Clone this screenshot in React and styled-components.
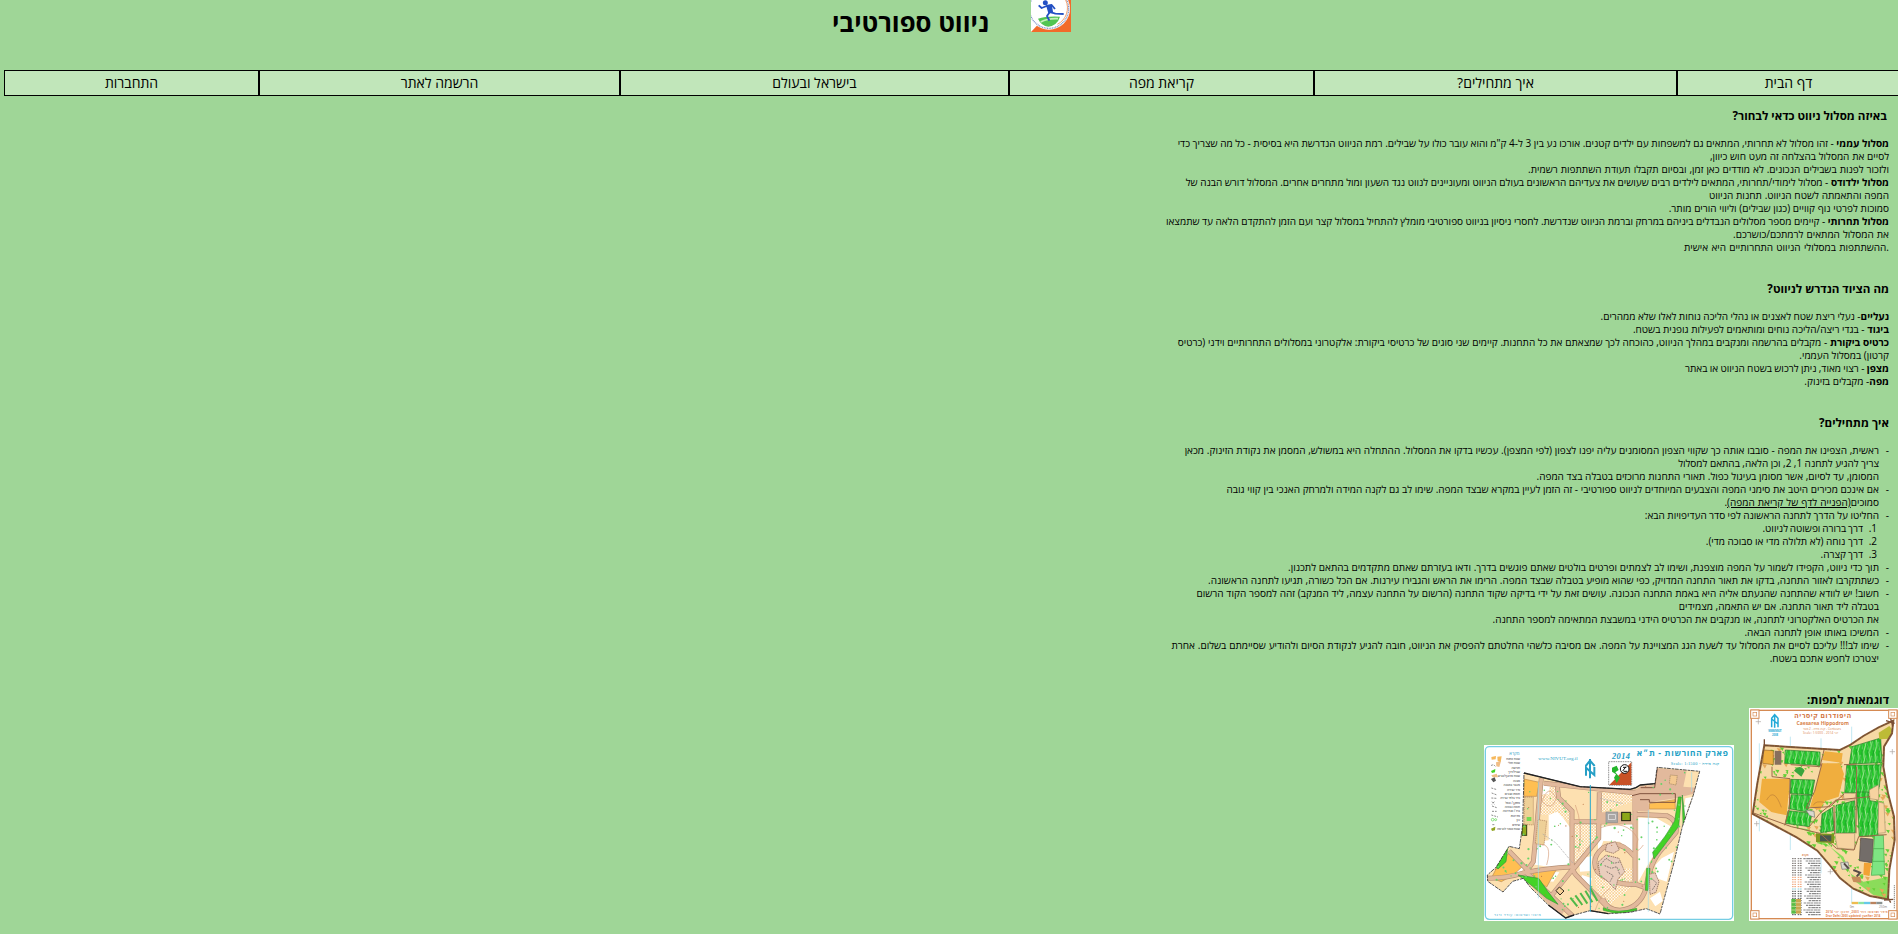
import React from "react";
import styled, { createGlobalStyle } from "styled-components";

const GlobalStyle = createGlobalStyle`
  * { box-sizing: border-box; }
  html, body { margin: 0; padding: 0; }
  body { background: #9fd697; color: #000; font-family: "Open Sans", "Noto Sans", sans-serif; overflow: hidden; }
`;
const Page = styled.div`
  width: 1898px;
  height: 934px;
  overflow: hidden;
  direction: rtl;
  display: flex;
  flex-direction: column;
`;
const Header = styled.header`
  height: 70px;
  padding-right: 827px;
  display: flex;
  align-items: flex-start;
  gap: 42px;
`;
const Logo = styled.svg`
  width: 40px;
  height: 40px;
  margin-top: -8px;
  flex: none;
`;
const Title = styled.h1`
  margin: 5px 0 0;
  font-size: 25.7px;
  line-height: 36px;
  font-weight: 700;
  white-space: nowrap;
`;
const Nav = styled.nav`
  display: flex;
  height: 26px;
  margin: 0 -2px 0 4px;
  flex: none;
`;
const NavItem = styled.a`
  width: ${(p) => p.$w}px;
  flex: none;
  border: 1px solid #000;
  background: #c1e6ba;
  font-size: 14px;
  line-height: 24px;
  text-align: center;
  color: #000;
  text-decoration: none;
`;
const Content = styled.main`
  padding-right: 9px;
  display: flex;
  flex-direction: column;
  align-items: flex-start;
`;
const Heading = styled.h3`
  margin: ${(p) => p.$top}px ${(p) => p.$inset || 0}px ${(p) => p.$bottom}px 0;
  font-size: 11.6px;
  line-height: 16px;
  font-weight: 700;
  white-space: nowrap;
`;
const Block = styled.div`
  display: flex;
  flex-direction: column;
  font-size: 10px;
  line-height: 13px;
`;
const Line = styled.div`
  height: 13px;
  display: flex;
  white-space: pre;
  padding-right: ${(p) => p.$indent}px;
`;
const Marker = styled.span`
  width: ${(p) => p.$w}px;
  flex: none;
`;
const Text = styled.span`
  word-spacing: ${(p) => p.$ws || 0}px;
`;
const MapLink = styled.a`
  color: #000;
  text-decoration: underline;
`;
const Maps = styled.div`
  display: flex;
  align-items: flex-end;
  gap: 15px;
  margin-right: -10px;
`;
const MapFrame = styled.svg`
  width: ${(p) => p.$w}px;
  height: ${(p) => p.$h}px;
  flex: none;
  display: block;
  direction: ltr;
`;

const nav = [
  ["דף הבית", 223],
  ["איך מתחילים?", 363],
  ["קריאת מפה", 305],
  ["בישראל ובעולם", 389],
  ["הרשמה לאתר", 361],
  ["התחברות", 255],
];

const routes = [
  { b: "מסלול עממי", t: " - זהו מסלול לא תחרותי, המתאים גם למשפחות עם ילדים קטנים. אורכו נע בין 3 ל-4 ק\"מ והוא עובר כולו על שבילים. רמת הניווט הנדרשת היא בסיסית - כל מה שצריך כדי", ws: 0 },
  { t: "לסיים את המסלול בהצלחה זה מעט חוש כיוון,", ws: 0.15 },
  { t: "ולזכור לפנות בשבילים הנכונים. לא מודדים כאן זמן, ובסיום תקבלו תעודת השתתפות רשמית.", ws: 0.38 },
  { b: "מסלול ילדודס", t: " - מסלול לימודי/תחרותי, המתאים לילדים רבים שעושים את צעדיהם הראשונים בעולם הניווט ומעוניינים לנווט נגד השעון ומול מתחרים אחרים. המסלול דורש הבנה של", ws: -0.05 },
  { t: "המפה והתאמתה לשטח הניווט. תחנות הניווט", ws: 0.2 },
  { t: "סמוכות לפרטי נוף קוויים (כגון שבילים) וליווי הורים מותר.", ws: 0.15 },
  { b: "מסלול תחרותי", t: " - קיימים מספר מסלולים הנבדלים ביניהם במרחק וברמת הניווט שנדרשת. לחסרי ניסיון בניווט ספורטיבי מומלץ להתחיל במסלול קצר ועם הזמן להתקדם הלאה עד שתמצאו", ws: -0.12 },
  { t: "את המסלול המתאים לרמתכם/כושרכם.", ws: 0.5 },
  { t: ".ההשתתפות במסלולי הניווט התחרותיים היא אישית", ws: 0.67 },
];
const gear = [
  { b: "נעליים", t: "- נעלי ריצת שטח לאצנים או נהלי הליכה נוחות לאלו שלא ממהרים.", ws: -0.1 },
  { b: "ביגוד", t: " - בגדי ריצה/הליכה נוחים ומותאמים לפעילות גופנית בשטח.", ws: 0 },
  { b: "כרטיס ביקורת", t: " - מקבלים בהרשמה ומנקבים במהלך הניווט, כהוכחה לכך שמצאתם את כל התחנות. קיימים שני סוגים של כרטיסי ביקורת: אלקטרוני במסלולים התחרותיים וידני (כרטיס", ws: 0.1 },
  { t: "קרטון) במסלול העממי." },
  { b: "מצפן", t: " - רצוי מאוד, ניתן לרכוש בשטח הניווט או באתר", ws: -0.27 },
  { b: "מפה", t: "- מקבלים בזינוק." },
];
const steps = [
  { m: "-", t: "ראשית, הצפינו את המפה - סובבו אותה כך שקווי הצפון המסומנים עליה יפנו לצפון (לפי המצפן). עכשיו בדקו את המסלול. ההתחלה היא במשולש, המסמן את נקודת הזינוק. מכאן", ws: 0.17 },
  { t: "צריך להגיע לתחנה 1, 2, וכן הלאה, בהתאם למסלול", ws: -0.12 },
  { t: "המסומן, עד לסיום, אשר מסומן בעיגול כפול. תאורי התחנות מרוכזים בטבלה בצד המפה.", ws: 0.1 },
  { m: "-", t: "אם אינכם מכירים היטב את סימני המפה והצבעים המיוחדים לניווט ספורטיבי - זה הזמן לעיין במקרא שבצד המפה. שימו לב גם לקנה המידה ולמרחק האנכי בין קווי גובה", ws: 0.08 },
  { t: "סמוכים", link: "(הפנייה לדף של קריאת המפה)", e: ".", ws: 0.4 },
  { m: "-", t: "החליטו על הדרך לתחנה הראשונה לפי סדר העדיפויות הבא:", ws: -0.15 },
  { m: "1.", t: "דרך ברורה ופשוטה לניווט.", ws: -0.8 },
  { m: "2.", t: "דרך נוחה (לא תלולה מדי או סבוכה מדי)." },
  { m: "3.", t: "דרך קצרה.", ws: -0.6 },
  { m: "-", t: "תוך כדי ניווט, הקפידו לשמור על המפה מוצפנת, ושימו לב לצמתים ופרטים בולטים שאתם פוגשים בדרך. ודאו בעזרתם שאתם מתקדמים בהתאם לתכנון.", ws: 0.13 },
  { m: "-", t: "כשתתקרבו לאזור התחנה, בדקו את תאור התחנה המדויק, כפי שהוא מופיע בטבלה שבצד המפה. הרימו את הראש והגבירו עירנות. אם הכל כשורה, תגיעו לתחנה הראשונה.", ws: 0.14 },
  { m: "-", t: "חשוב! יש לוודא שהתחנה שהגעתם אליה היא באמת התחנה הנכונה. עושים זאת על ידי בדיקה שקוד התחנה (הרשום על התחנה עצמה, ליד המנקב) זהה למספר הקוד הרשום", ws: 0.21 },
  { t: "בטבלה ליד תאור התחנה. אם יש התאמה, מצמידים", ws: 0.1 },
  { t: "את הכרטיס האלקטרוני לתחנה, או מנקבים את הכרטיס הידני במשבצת המתאימה למספר התחנה.", ws: 0.05 },
  { m: "-", t: "המשיכו באותו אופן לתחנה הבאה.", ws: 0.27 },
  { m: "-", t: "שימו לב!!! עליכם לסיים את המסלול עד לשעת הגג המצויינת על המפה. אם מסיבה כלשהי החלטתם להפסיק את הניווט, חובה להגיע לנקודת הסיום ולהודיע שסיימתם בשלום. אחרת", ws: 0.24 },
  { t: "יצטרכו לחפש אתכם בשטח." },
];

function Lines({ items, list }) {
  return (
    <Block>
      {items.map((l, k) => {
        const numbered = l.m && l.m !== "-";
        const indent = numbered ? 12 : list && !l.m ? 10 : 0;
        return (
          <Line key={k} $indent={indent}>
            {l.m && <Marker $w={numbered ? 14 : 10}>{l.m}</Marker>}
            <Text $ws={l.ws}>
              {l.b && <b>{l.b}</b>}
              {l.t}
              {l.link && <MapLink>{l.link}</MapLink>}
              {l.e}
            </Text>
          </Line>
        );
      })}
    </Block>
  );
}

function scatter(seed, n, x, y, w, h) {
  let s = seed;
  const next = () => {
    s = (s * 16807) % 2147483647;
    return s / 2147483647;
  };
  return Array.from({ length: n }, () => [x + next() * w, y + next() * h, next()]);
}

function ClubLogo() {
  return (
    <Logo viewBox="693 -24 120 120">
      <rect x="693" y="-24" width="120" height="120" fill="#fff" />
      <path d="M813-24V96H693L712 76Z" fill="#f26a2a" />
      <circle cx="747" cy="26" r="63" fill="#fff" />
      <circle cx="747" cy="26" r="59" fill="none" stroke="#8194c8" strokeWidth="4" strokeDasharray="3 2" />
      <path d="M797 0A55 55 0 0 1 772 73" fill="none" stroke="#f2a072" strokeWidth="3" />
      <path d="M714 56Q738 48 780 50Q772 76 745 80Q724 78 714 56Z" fill="#52c552" />
      <path d="M722 66Q744 54 774 56" stroke="#c4f0ba" strokeWidth="5" fill="none" />
      <circle cx="736" cy="8" r="7.5" fill="#2450c4" />
      <path d="M716 16L725 24L740 18L755 15L765 27M745 20L750 36L766 41L791 42M749 37L741 48L748 62" fill="none" stroke="#2450c4" strokeWidth="5.5" strokeLinejoin="round" />
      <path d="M738 16L755 14L760 40L745 40Z" fill="#2450c4" />
    </Logo>
  );
}

const hippoOutline = "M103 136L330 150L362 134L400 108L446 82L490 62L486 100L462 140L460 200L474 280L492 350L494 420L478 510L474 598L420 588L370 566L330 534L300 496L262 452L200 412L68 342L82 250Z";
const hippoFields = [
  "M166 150L270 156L270 196L164 190Z",
  "M182 238L254 240L246 284L180 280Z",
  "M184 284L246 286L232 336L176 326Z",
  "M174 332L246 340L238 380L166 370Z",
  "M366 140L452 114L456 188L358 192Z",
  "M350 196L454 194L448 262L420 278L344 278Z",
  "M380 276L414 276L420 302L446 306L444 408L388 410Z",
  "M318 316L374 302L376 398L318 400Z",
  "M276 342L308 322L312 392L272 398Z",
];

function Corner({ x, y }) {
  return (
    <g fill="none" stroke="#d58a52" strokeWidth="3">
      <rect x={x} y={y} width="25" height="25" fill="#fff" />
      <rect x={x + 7} y={y + 7} width="11" height="11" strokeWidth="2" />
    </g>
  );
}

function HippodromeMap() {
  return (
    <MapFrame $w={150} $h={213} viewBox="57 24 450 639">
      <defs>
        <clipPath id="hippo"><path d={hippoOutline} /></clipPath>
        <pattern id="rows" width="17" height="43" patternUnits="userSpaceOnUse" patternTransform="rotate(4)">
          <rect width="17" height="43" fill="#24c62a" />
          <path d="M3 0L7 21L2 43M11 8L15 34" stroke="#c2f0b0" strokeWidth="2.5" fill="none" />
          <path d="M15 0L12 20L16 43" stroke="#138f24" strokeWidth="2" fill="none" />
        </pattern>
      </defs>
      <rect x="57" y="24" width="450" height="639" fill="#fff" />
      <rect x="64" y="31" width="437" height="625" fill="none" stroke="#d58a52" strokeWidth="4" />
      <Corner x={62} y={30} /><Corner x={476} y={30} /><Corner x={62} y={632} /><Corner x={476} y={632} />
      <path d="M88 130V394M181 110V450M273 115V520M365 80V610M457 80V600" stroke="#a5dced" strokeWidth="2" />
      <path d={hippoOutline} fill="#f7d9a4" />
      <g clipPath="url(#hippo)">
        <path d="M150 375L205 384L250 400L300 440L340 470L370 540L430 585L474 598V530L430 540L400 545L360 520L330 470L300 440L262 430L255 400L235 388Z" fill="#8bdc5a" />
        {scatter(17, 520, 70, 130, 420, 460).map(([x, y, r], i) => (
          <path key={i} d={`M${x} ${y}l${6 + r * 9} ${r * 6 - 3}l${-r * 6} ${6 + r * 5}z`} fill={r > 0.85 ? "#e6a85a" : "#63cf36"} />
        ))}
        <path d="M96 236L180 236L170 346L124 336L88 306Z M284 154L338 160L334 188L276 180Z M276 190H330L342 222L326 290L284 304L270 330L240 322L254 272Z" fill="#f0ae3e" />
        <path d="M100 150L130 152V194L98 190Z" fill="#efae3f" stroke="#9a6425" strokeWidth="2" />
        <path d="M134 152L154 153V194H134Z" fill="#876f5d" />
        <path d="M192 212Q210 190 224 212L214 230Z" fill="#39a53c" />
        {hippoFields.map((d) => <path key={d} d={d} fill="url(#rows)" stroke="#277b2a" strokeWidth="2" />)}
        <path d="M340 280L378 280L374 300L342 300ZM418 270L446 254V300L420 296ZM446 306L462 310L466 398L444 400ZM314 400H374V448L322 444Z" fill="#f7d3a0" stroke="#ad926c" strokeWidth="2" />
        <path d="M446 98L478 78L486 88L480 116L448 118Z" fill="#bdbb36" />
        <path d="M392 414L430 418L426 488L388 482Z" fill="#736d69" stroke="#554c45" strokeWidth="2" />
        <path d="M434 404L460 406L464 524L424 526L428 484Z" fill="#7ee582" stroke="#43a849" strokeWidth="2" />
        <path d="M430 446H462M428 484H464" stroke="#43a849" strokeWidth="2" />
        <path d="M402 488L424 490L418 528L400 524Z" fill="#f2a234" />
        <path d="M258 400L312 402V430L258 426Z" fill="#7d951f" />
        <rect x="270" y="406" width="34" height="18" fill="#49574e" />
        <path d="M228 330L252 334L254 352L238 346ZM332 488L354 486L358 506L336 508Z" fill="#d8d8ce" stroke="#777" strokeWidth="2" />
        <path d="M342 490L356 506M370 510L390 518L380 530" fill="none" stroke="#574b46" strokeWidth="6" />
        <path d="M364 530L392 530L394 548L370 546Z" fill="#c58d5b" />
        <path d="M276 190L254 274L228 324L300 320L342 282M342 194L380 192M282 150L270 200L182 194M68 338L184 380L270 400L320 446L372 450L386 410L470 404M380 200L378 400M312 318L314 402M238 380L270 340L318 300L420 290M126 200V230L180 236L178 326L164 376" fill="none" stroke="#9c6a49" strokeWidth="3" />
        <path d="M286 308Q256 300 250 316M110 300Q132 260 154 322" fill="none" stroke="#bd7f38" strokeWidth="2" />
      </g>
      <path d={hippoOutline} fill="none" stroke="#8f633c" strokeWidth="6" />
      <path d={hippoOutline} fill="none" stroke="#65432e" strokeWidth="2" strokeDasharray="13 3" />
      <path d="M103 136V118M462 600L490 598M472 589L482 608M468 62L494 70M482 56L488 78" stroke="#7a4d34" strokeWidth="4" />
      <path d="M125 82V55L134 44L144 55V82M134 43V83M125 57L144 72" fill="none" stroke="#22a9d8" strokeWidth="4.5" />
      <text x="135" y="97" textAnchor="middle" fontSize="8" fontWeight="700" fill="#34add5" textLength="40">WWW.NIVUT</text>
      <text x="135" y="107" textAnchor="middle" fontSize="8" fontWeight="700" fill="#34add5">2008</text>
      <text x="278" y="54" textAnchor="middle" fontSize="20" fontWeight="700" fill="#d0713c" textLength="170">היפודרום קיסריה</text>
      <text x="278" y="74" textAnchor="middle" fontSize="15" fontWeight="700" fill="#d87f4a" textLength="157">Caesarea Hippodrom</text>
      <text x="276" y="90" textAnchor="middle" fontSize="9" fill="#d9804d" textLength="114">קנה מידה - 2 מטר - Contours</text>
      <text x="272" y="101" textAnchor="middle" fontSize="9" fill="#d9804d" textLength="106">Scale: 1:5000 - יוני 2014</text>
      <path d="M85 57V73M77 65H93M487 147V163M479 155H495M80 363V379M72 371H88M301 507V523M293 515H309" stroke="#aaa5a0" strokeWidth="2" />
      <text x="226" y="469" textAnchor="middle" fontSize="8" fontWeight="700" fill="#d98048">מקרא</text>
      {Array.from({ length: 25 }, (_, i) => (
        <g key={i}>
          <path d={`M${220 + (i * 7) % 22} ${476 + i * 7}H272`} stroke="#8b8b8b" strokeWidth="3.5" strokeDasharray="7 2 12 1" />
          <path d={`M186 ${476 + i * 7}H199M203 ${476 + i * 7}H215`} stroke={i < 8 ? "#77716e" : i < 13 ? "#efa276" : i < 14 ? "#88ccd8" : "#555"} strokeWidth="3" strokeDasharray="5 2" />
        </g>
      ))}
      <rect x="184" y="597" width="13" height="44" fill="#58bd44" />
      <rect x="198" y="597" width="15" height="44" fill="#caa64e" />
      <path d="M184 608H213M184 619H213M184 630H213" stroke="#e8e3af" strokeWidth="2" />
      <path d="M365 609H385" stroke="#edbc50" strokeWidth="7" />
      <path d="M385 609H402" stroke="#8ce3a5" strokeWidth="7" />
      <path d="M402 609H421" stroke="#66c9e9" strokeWidth="7" />
      <path d="M421 609H439" stroke="#ba835e" strokeWidth="7" />
      <path d="M439 609H457" stroke="#8a9290" strokeWidth="7" />
      <text x="359" y="625" fontSize="9" fill="#777">0m</text>
      <text x="447" y="625" fontSize="9" fill="#777">250m</text>
      <text x="287" y="639" fontSize="8" fontWeight="700" fill="#df7944" textLength="186">מיפוי ושרטוט: רועי 2003, עדכון: יוני 2014</text>
      <text x="287" y="650" fontSize="8" fontWeight="700" fill="#df7944" textLength="164">Dror Dafni 2003 updated: yunfter 2014</text>
      <path d="M493 555V626" stroke="#8c8b87" strokeWidth="3" strokeDasharray="4 2" />
    </MapFrame>
  );
}

const parkOutline = "M162 114L330 155L480 163L498 158L511 150L555 146L561 97L689 109L670 180L637 275L610 390L570 537L529 521L480 532L415 536L360 527L312 540L287 549L235 510L183 459L160 430L128 439L99 471L53 439L52 420L78 397L117 334L148 341L158 270Z";
const parkPaths = "M214 130L190 380L168 412L310 545M222 145L480 172L690 168M262 155L266 188L306 228V382Q306 408 318 420L412 516M168 412Q108 430 50 430M117 348L175 408M168 412Q230 400 302 396M388 172L386 310L312 400M308 260H490M495 180V448M500 238L590 242Q624 256 618 292L578 340Q540 380 528 460Q510 520 450 526Q410 524 398 490M498 448Q430 452 382 410Q360 370 400 338Q450 310 492 364M498 448L532 460M306 405L246 480";

function ParkMap() {
  return (
    <MapFrame $w={250} $h={176} viewBox="42 30 750 528">
      <defs>
        <clipPath id="park"><path d={parkOutline} /></clipPath>
        <pattern id="dots" width="9" height="9" patternUnits="userSpaceOnUse">
          <rect width="9" height="9" fill="#f9d398" />
          <path d="M0 4H4V0H9V4H4V9H0Z" fill="#fff8ec" />
        </pattern>
      </defs>
      <rect x="42" y="30" width="750" height="528" fill="#fff" />
      <rect x="46" y="35" width="742" height="518" rx="12" fill="none" stroke="#75cde4" strokeWidth="4" />
      <g clipPath="url(#park)">
        <path d={parkOutline} fill="#fde0b0" />
        <path d="M218 145L260 155L268 190L302 226L304 262L260 240L210 240ZM390 172L490 176L484 202L400 230L384 230ZM314 264L384 264L384 310L330 374L312 390ZM390 400L494 400V450L420 508L384 480L372 420Z" fill="url(#dots)" />
        <path d="M236 240L262 230L280 250L302 280L300 396L240 396L186 388L190 330L205 320L236 316ZM394 272L494 268V372L450 320L400 318L384 360V300ZM505 248L560 250L602 274L590 304L560 345L530 395L505 440ZM575 370L612 350L590 440L560 430L556 390ZM326 368L366 364L362 408L330 410ZM540 490L570 470L578 498L556 514ZM240 410L268 412L250 440L228 438ZM336 420L366 430L360 450L330 440ZM134 400L160 392L156 416L136 422ZM218 150H240L236 178H216ZM646 190L666 186L640 260L642 222Z" fill="#fff" />
        <path d="M162 132L208 142L200 184L162 184ZM538 206L615 194L616 222L538 222ZM188 409L260 402L230 456L190 430ZM78 402L120 350L162 390L130 420L94 440L64 430Z" fill="#ffbf52" stroke="#bb8950" strokeWidth="2" />
        <path d={parkPaths} fill="none" stroke="#b79177" strokeWidth="15" />
        <path d={parkPaths} fill="none" stroke="#e2b99c" strokeWidth="11" />
        <path d="M562 100L650 107L640 155L680 158V174L618 190L536 202L538 230L488 228L486 176L512 152L552 150ZM386 232H490V266H386ZM160 428L190 430L288 520L272 545Z" fill="#e2b99c" />
        <path d="M486 182L510 176H616V202H538V194H510M512 158H554L562 100" fill="none" stroke="#80543f" strokeWidth="3" />
        <path d="M601 120L622 122L618 150L598 146Z" fill="#f4c990" stroke="#9c805a" strokeWidth="2" strokeDasharray="4 2" />
        <path d="M78 397L114 332L108 380L84 402ZM144 420L206 430Q232 470 264 508L230 490L188 454ZM625 186H634L626 274Q590 322 552 372L548 352Q590 302 614 258ZM637 180L645 250L639 268ZM530 400H540L534 466H526ZM400 518Q440 538 500 520L500 526L445 537L400 526Z" fill="#43d326" stroke="#36943a" strokeWidth="2" />
        {[0, 1, 2, 3, 4].map((i) => <path key={i} d={`M${301 + i * 15} ${488 - i * 7}L${322 + i * 15} ${514 - i * 4}`} stroke="#4fb848" strokeWidth="6" />)}
        <rect x="408" y="231" width="35" height="31" fill="#aaa7a5" stroke="#8b8d90" strokeWidth="2" />
        <rect x="415" y="239" width="21" height="14" fill="none" stroke="#eee" strokeWidth="2" />
        <rect x="455" y="232" width="26" height="25" fill="#8ca719" stroke="#1c1d12" strokeWidth="3" />
        <rect x="156" y="270" width="14" height="31" fill="#91ab1f" stroke="#353e13" strokeWidth="3" />
        <path d="M164 186L190 186V270L162 268ZM204 254L230 258L222 330L196 326Z" fill="#eed097" stroke="#ad8059" strokeWidth="2" strokeDasharray="4 2" />
        <rect x="170" y="246" width="14" height="12" fill="#74db54" />
        <path d="M410 328L436 320L448 344L430 355L406 348ZM384 382L408 360L447 370L464 410L444 432L436 464L410 436L390 422ZM538 418L555 413L567 440L558 472L540 478Z" fill="#e9cdbc" stroke="#9c7a68" strokeWidth="3" strokeDasharray="4 2" />
        <path d="M392 388L408 370L432 385L452 380M404 392L424 400L440 395L450 420M410 410L430 422L420 440M544 430L560 444L546 466" fill="none" stroke="#80776f" strokeWidth="3" strokeDasharray="5 3" />
        <path d="M216 200Q236 142 258 190Q248 232 216 200ZM392 278Q470 250 504 312Q490 370 520 330M204 330Q250 320 230 390M420 460Q390 480 374 530M316 210Q340 270 326 350" fill="none" stroke="#d79e7b" strokeWidth="2" />
        {scatter(71, 200, 60, 110, 600, 420).map(([x, y, r], i) => (
          <circle key={i} cx={x} cy={y} r={1.5 + r * 2} fill={r > 0.14 ? "#67d368" : "#b76b3d"} />
        ))}
        <path d="M258 467L268 456L282 468L270 480Z" fill="#f7d196" stroke="#312920" strokeWidth="3" />
        <path d="M218 297L258 324L310 386M390 190L460 206" fill="none" stroke="#aaa" strokeWidth="2" strokeDasharray="7 3" />
      </g>
      <path d={parkOutline} fill="none" stroke="#333" strokeWidth="2.5" strokeDasharray="12 3 7 2" />
      <path d="M162 114L330 155L480 163L498 158L511 150L555 146M312 540L287 549L235 510M415 536L360 527" fill="none" stroke="#222" strokeWidth="4" />
      <path d="M361 150V530" stroke="#28a9cc" strokeWidth="3" />
      <path d="M205 140V490M535 225V530M665 112V170" stroke="#a2ddea" strokeWidth="2" />
      <path d="M360 72V130M347 93L360 77L374 93M348 122V98L373 120V96" fill="none" stroke="#269fc6" strokeWidth="6" />
      <text x="205" y="75" fontSize="15" fontFamily="Liberation Serif" fill="#259fc5" textLength="118">www.NIVUT.org.il</text>
      <text x="426" y="72" fontSize="25" fontFamily="Liberation Serif" fontStyle="italic" fontWeight="700" fill="#249dc5" textLength="54">2014</text>
      <rect x="416" y="80" width="69" height="71" fill="#fff" stroke="#666" strokeWidth="2" strokeDasharray="5 2" />
      <path d="M484 82V150H418Z" fill="#c85126" />
      <path d="M426 98L440 92L446 105L436 112L450 128L440 144L432 128L438 118L426 110Z" fill="#24b52b" />
      <circle cx="464" cy="102" r="13" fill="#fff" stroke="#111" strokeWidth="3" />
      <path d="M458 108L468 95M459 97H469M461 109H471" stroke="#111" strokeWidth="3" />
      <text x="637" y="62" textAnchor="middle" fontSize="25" fontWeight="700" fill="#249fc5" textLength="273">פארק החורשות - ת״א</text>
      <text x="675" y="89" textAnchor="middle" fontSize="13" fontFamily="Liberation Serif" fill="#249fc5" textLength="145">Scale: 1:1500 - קנה מידה</text>
      <text x="133" y="61" textAnchor="middle" fontSize="13" fill="#269ec5">מקרא</text>
      {["שטח פתוח", "שטח חולי", "חורשה", "שביל/דרך", "שטח מרוצף/כביש", "מבנה", "מעבר במבנה", "גדר עבירה", "חומת אבנים", "גדר בלתי עבירה", "מתקן / פסל", "חומה גבוהה", "ברז / אנדרטה", "מדרגות", "עץ", "שיחים", "שטח אסור לכניסה"].map((t, i) => (
        <text key={t} x="150" y={75 + i * 13.1} textAnchor="end" fontSize="9.5" fill="#222">{t}</text>
      ))}
      <path d="M64 66L78 63L77 73L65 74ZM82 65L95 64L92 82L83 78Z" fill="#f6b85c" />
      <path d="M78 82L93 78L88 96L79 94ZM64 121L80 116L84 127L68 127Z" fill="#f0bd86" />
      <path d="M63 108L76 102L75 112L66 114Z" fill="#43d326" />
      <path d="M63 132L74 127L78 137L70 142Z" fill="#555" />
      <path d="M63 92Q70 86 77 95M64 159L81 164M65 174L81 180M64 189L80 190M66 200L73 208M73 200L66 208M66 213L80 218M66 229H80M64 240L84 246M67 269H76" fill="none" stroke="#555" strokeWidth="2" strokeDasharray="6 3" />
      <circle cx="68" cy="254" r="4" fill="none" stroke="#58d348" strokeWidth="2" />
      <circle cx="77" cy="254" r="3" fill="none" stroke="#58d348" strokeWidth="2" />
      <path d="M63 281L76 275L75 286L66 288Z" fill="#91a31e" />
      <text x="72" y="542" fontSize="11" fill="#2aa5c9" textLength="140">מיפוי ושרטוט: עודד ורנר</text>
    </MapFrame>
  );
}

export default function App() {
  return (
    <>
      <GlobalStyle />
      <Page>
        <Header>
          <ClubLogo />
          <Title>ניווט ספורטיבי</Title>
        </Header>
        <Nav>
          {nav.map(([label, w]) => (
            <NavItem key={label} $w={w}>{label}</NavItem>
          ))}
        </Nav>
        <Content>
          <Heading $top={12} $inset={2} $bottom={13}>באיזה מסלול ניווט כדאי לבחור?</Heading>
          <Lines items={routes} />
          <Heading $top={27} $bottom={13}>מה הציוד הנדרש לניווט?</Heading>
          <Lines items={gear} />
          <Heading $top={27} $bottom={13}>איך מתחילים?</Heading>
          <Lines items={steps} list />
          <Heading $top={27} $bottom={0}>דוגמאות למפות:</Heading>
          <Maps>
            <HippodromeMap />
            <ParkMap />
          </Maps>
        </Content>
      </Page>
    </>
  );
}
